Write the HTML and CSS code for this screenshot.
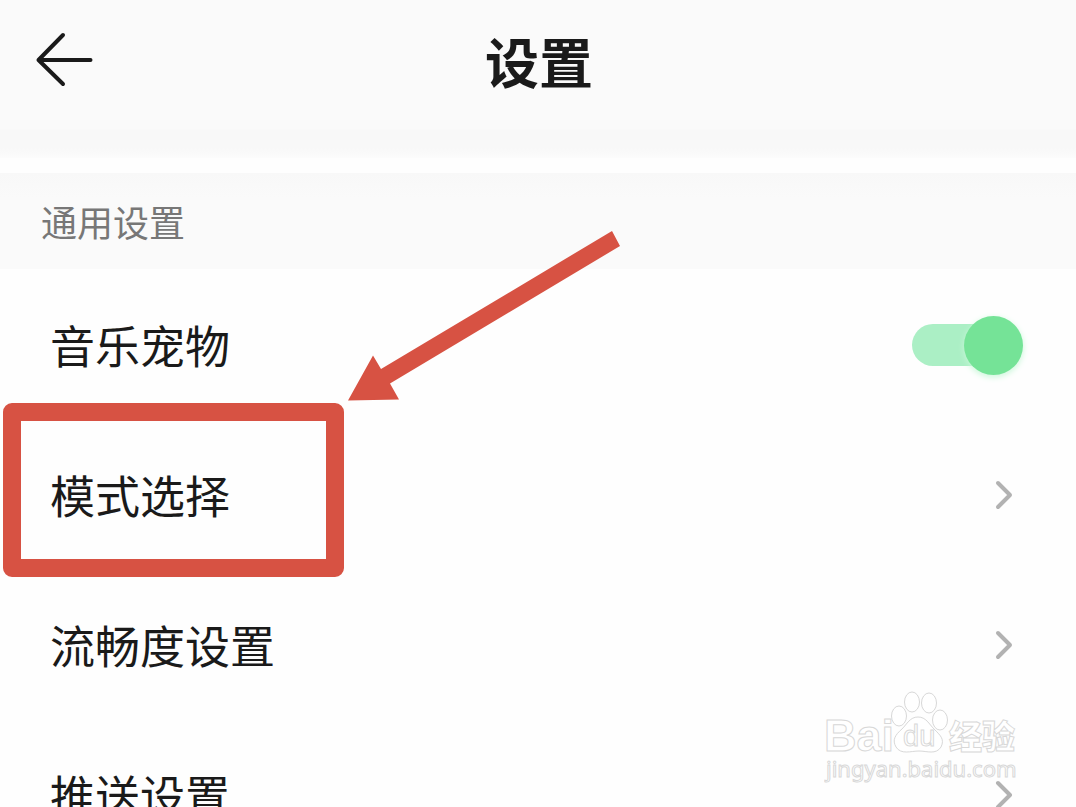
FILE: index.html
```html
<!DOCTYPE html>
<html lang="zh-CN">
<head>
<meta charset="utf-8">
<meta name="viewport" content="width=device-width, initial-scale=1">
<title>设置</title>
<link rel="stylesheet" href="styles.css">
</head>
<body>
<header class="topbar">
  <button class="back" type="button" aria-label="返回">
    <svg class="back-icon" viewBox="0 0 64 60" aria-hidden="true"><path d="M31 4 L6.500 29 L31 53 M6.500 29 H58.500"/></svg>
  </button>
  <h1 class="title">设置</h1>
</header>
<main class="settings">
  <h2 class="section-title">通用设置</h2>
  <ul class="list">
    <li class="item">
      <label class="row" for="pet">
        <span>音乐宠物</span>
        <input class="switch" id="pet" type="checkbox" role="switch" checked>
      </label>
    </li>
    <li class="item">
      <a class="row" href="#mode">
        <span>模式选择</span>
        <svg class="chevron" viewBox="0 0 20 32" aria-hidden="true"><path d="M4 4 L16 16 L4 28"/></svg>
      </a>
      <div class="highlight"></div>
      <svg class="arrow" viewBox="0 0 274 171" aria-hidden="true"><path d="M1 170.500 L26 125.500 L34 139 L265 1 L273 16 L43 153.500 L52 169.500 Z"/></svg>
    </li>
    <li class="item">
      <a class="row" href="#smooth">
        <span>流畅度设置</span>
        <svg class="chevron" viewBox="0 0 20 32" aria-hidden="true"><path d="M4 4 L16 16 L4 28"/></svg>
      </a>
    </li>
    <li class="item">
      <a class="row" href="#push">
        <span>推送设置</span>
        <svg class="chevron" viewBox="0 0 20 32" aria-hidden="true"><path d="M4 4 L16 16 L4 28"/></svg>
      </a>
    </li>
  </ul>
</main>
<svg class="watermark" viewBox="0 0 200 96" role="img" aria-label="Baidu 经验 jingyan.baidu.com">
  <text class="mark-latin" x="0" y="61">Bai</text>
  <g class="paw">
    <ellipse cx="75" cy="26" rx="7.500" ry="10"/>
    <ellipse cx="88" cy="12" rx="7.500" ry="10"/>
    <ellipse cx="105" cy="13" rx="7.500" ry="10"/>
    <ellipse cx="116" cy="30" rx="7.500" ry="10"/>
    <path d="M94 27 C86 27 83 34 78 39 C71 45 68 50 72 57 C77 65 87 61 95 61 C103 61 112 65 117 57 C121 49 116 45 110 39 C105 34 102 27 94 27 Z"/>
  </g>
  <text class="mark-du" x="79" y="56">du</text>
  <text class="mark-cjk" x="125" y="59">经验</text>
  <text class="mark-url" x="2" y="87">jingyan.baidu.com</text>
</svg>
</body>
</html>
```
FILE: styles.css
```css
* {
  box-sizing: border-box;
}

body {
  margin: 0;
  height: 100vh;
  position: relative;
  overflow: hidden;
  background: #fefefe;
  color: #1a1a1a;
  font-family: "Noto Sans CJK SC", "Noto Sans", sans-serif;
}

.topbar {
  display: grid;
  grid-template-columns: 64px 1fr 62px;
  align-items: center;
  height: 158px;
  padding: 0 32px 36px;
  background: linear-gradient(#fafafa 129px, #f8f8f8 130px, #f8f8f8 148px, #fcfcfc 158px);
}

.back {
  display: flex;
  padding: 0;
  border: 0;
  background: none;
}

.back-icon {
  width: 64px;
  height: 60px;
  fill: none;
  stroke: #1a1a1a;
  stroke-width: 4;
  stroke-linecap: round;
  stroke-linejoin: round;
}

.title {
  margin: 0;
  text-align: center;
  font-size: 54px;
  font-weight: 700;
  line-height: 80px;
}

.section-title {
  margin: 15px 0 0;
  padding: 24px 41px;
  background: linear-gradient(#f8f8f8, #fafafa 24px);
  color: #777777;
  font-size: 36px;
  font-weight: 400;
  line-height: 48px;
}

.list {
  margin: 0;
  padding: 1px 0 0;
  list-style: none;
}

.item {
  position: relative;
}

.row {
  display: flex;
  align-items: center;
  justify-content: space-between;
  height: 150px;
  padding: 0 62px 0 50px;
  color: inherit;
  font-size: 45px;
  line-height: 64px;
  text-decoration: none;
}

.chevron {
  width: 20px;
  height: 32px;
  fill: none;
  stroke: #b2b2b2;
  stroke-width: 4;
  stroke-linecap: round;
  stroke-linejoin: round;
}

.switch {
  appearance: none;
  display: flex;
  align-items: center;
  justify-content: flex-end;
  width: 102px;
  height: 42px;
  margin: 0;
  border-radius: 21px;
  background: #abefc5;
}

.switch::before {
  content: "";
  flex: none;
  width: 59px;
  height: 59px;
  margin-right: -9px;
  border-radius: 50%;
  background: #75e397;
  box-shadow: 0 2px 6px #c8f7d8;
}

.highlight {
  position: absolute;
  top: -17px;
  bottom: -7px;
  left: 3px;
  width: 341px;
  border: 18px solid #d75243;
  border-radius: 9px;
  pointer-events: none;
}

.arrow {
  position: absolute;
  top: -190px;
  left: 347px;
  width: 274px;
  height: 171px;
  fill: #d75243;
  pointer-events: none;
}

.watermark {
  position: absolute;
  right: 52px;
  bottom: 21px;
  width: 200px;
  height: 96px;
  fill: #ffffff;
  stroke: #d8d8d8;
  stroke-width: 1;
  pointer-events: none;
}

.mark-latin {
  font: 700 45px "Liberation Sans", sans-serif;
}

.mark-du {
  font: 400 29px "Liberation Sans", sans-serif;
}

.mark-cjk {
  font: 900 33px "Noto Sans CJK SC", sans-serif;
}

.mark-url {
  font: 400 22px "Noto Sans", sans-serif;
}
```
